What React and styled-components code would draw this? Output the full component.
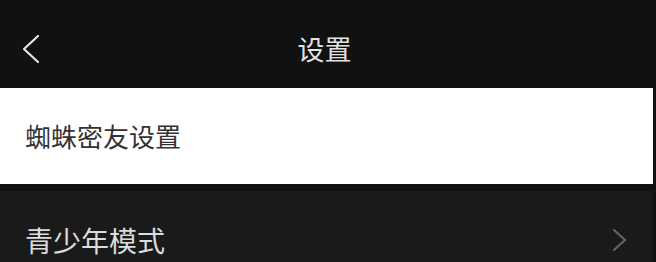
import React from "react";
import styled, { createGlobalStyle } from "styled-components";

const Global = createGlobalStyle`
  html, body { margin: 0; padding: 0; background: #111111; overflow: hidden; }
  body { font-family: "Noto Sans CJK SC", "Noto Sans", sans-serif; }
`;

const Page = styled.div`
  width: 656px;
  height: 262px;
  background: #111111;
  display: flex;
  flex-direction: column;
  padding-right: 3px;
  box-sizing: border-box;
  overflow: hidden;
`;

const Header = styled.div`
  height: 88px;
  flex-shrink: 0;
  display: grid;
  grid-template-columns: 60px 1fr 60px;
  align-items: center;
  padding-top: 9px;
  box-sizing: border-box;
`;

const BackButton = styled.div`
  display: flex;
  align-items: center;
  padding-left: 23px;
`;

const Title = styled.div`
  text-align: center;
  color: #e2e2e2;
  font-size: 27px;
  line-height: 1;
  padding-right: 4px;
`;

const Section = styled.div`
  background: ${(p) => (p.$light ? "#ffffff" : "#1a1a1a")};
  height: 96px;
  flex-shrink: 0;
  display: flex;
  align-items: center;
  justify-content: space-between;
  padding: ${(p) => (p.$light ? "0 26px 0 25px" : "2px 27px 0 25px")};
  box-sizing: border-box;
`;

const Gap = styled.div`
  height: 7px;
  flex-shrink: 0;
`;

const Label = styled.span`
  color: ${(p) => (p.$light ? "#333333" : "#dcdcdc")};
  font-size: ${(p) => (p.$light ? "26px" : "28px")};
  line-height: 1;
`;

const Chevron = ({ color, dir, w, h, sw }) => (
  <svg width={w} height={h} viewBox={`0 0 ${w} ${h}`} fill="none">
    <path
      d={
        dir === "left"
          ? `M${w - 1} 1 L1 ${h / 2} L${w - 1} ${h - 1}`
          : `M1 1 L${w - 1} ${h / 2} L1 ${h - 1}`
      }
      stroke={color}
      strokeWidth={sw}
      strokeLinecap="round"
      strokeLinejoin="round"
    />
  </svg>
);

export default function App() {
  return (
    <>
      <Global />
      <Page>
        <Header>
          <BackButton>
            <Chevron dir="left" color="#e6e6e6" w={16} h={28} sw={2.2} />
          </BackButton>
          <Title>设置</Title>
          <div />
        </Header>
        <Section $light>
          <Label $light>蜘蛛密友设置</Label>
        </Section>
        <Gap />
        <Section>
          <Label>青少年模式</Label>
          <Chevron dir="right" color="#666666" w={13} h={22} sw={2} />
        </Section>
      </Page>
    </>
  );
}
